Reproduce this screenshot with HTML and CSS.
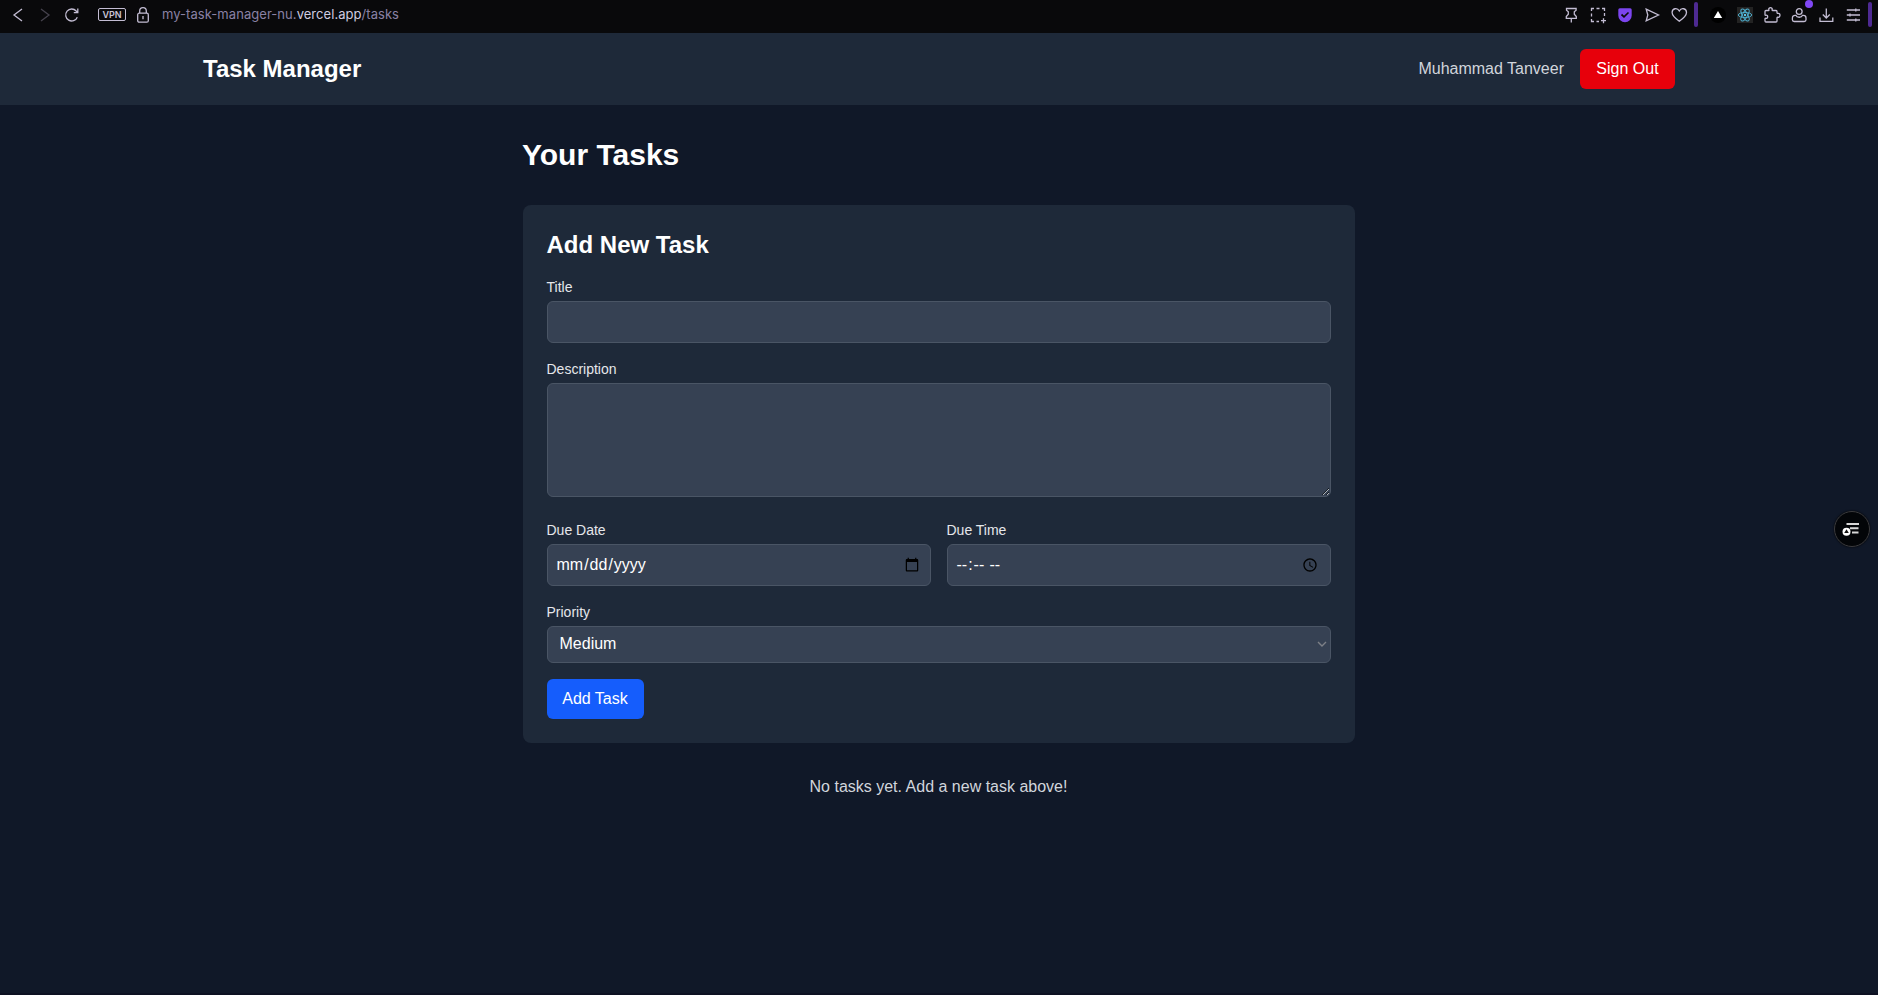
FILE: index.html
```html
<!DOCTYPE html>
<html lang="en">
<head>
<meta charset="utf-8">
<title>Task Manager</title>
<link rel="stylesheet" href="styles.css">
</head>
<body>
<div class="browser-bar">
  <div class="nav-tools">
    <svg class="icon" viewBox="0 0 16 16"><path d="M12 2 4 8l8 6"/></svg>
    <svg class="icon icon-disabled" viewBox="0 0 16 16"><path d="m4 2 8 6-8 6"/></svg>
    <svg class="icon" viewBox="0 0 16 16"><path d="M13.300 10.200A6 6 0 1 1 12.200 4l1.300 1.300M13.800 1.600V5.600h-4"/></svg>
  </div>
  <span class="vpn">VPN</span>
  <svg class="lock" viewBox="0 0 12 16"><rect x=".7" y="6.200" width="10.600" height="9" rx="1.500"/><path d="M2.700 6V4a3.300 3.300 0 0 1 6.600 0v2M6 9v3.200"/></svg>
  <div class="url">my-task-manager-nu.<span class="domain">vercel.app</span>/tasks</div>
  <div class="actions">
    <svg class="icon" viewBox="0 0 16 16"><path d="M3.500 1.500h9.600v1.800L11.300 4.800v2.500l2 2.200v1.800h-10V9.500l2-2.200V4.800L3.500 3.300ZM8.300 11.300v4.200"/></svg>
    <svg class="icon" viewBox="0 0 16 16"><path d="M1.500 4V1.500H4M6.500 1.500h3M12 1.500h2.500V4M14.500 6v3M1.500 6.500v3M1.500 12v2.500H4M6.500 14.500H9M11 13.700h5M13.500 11.200v5"/></svg>
    <svg class="icon" viewBox="0 0 16 16"><path class="pocket" d="M2.800 1.200h10.400a1.500 1.500 0 0 1 1.500 1.500V8.500a6.700 6.700 0 0 1-13.400 0V2.700a1.500 1.500 0 0 1 1.500-1.500Z"/><path class="pocket-check" d="m4.500 7.500 2.500 2.300 4.500-4.300"/></svg>
    <svg class="icon" viewBox="0 0 16 16"><path d="M2.200 2.200 14.500 8 2.200 13.800 3.800 8Z"/></svg>
    <svg class="icon" viewBox="0 0 16 16"><path d="M8.300 14.300C4.300 11.400 1.100 8.800 1.100 5.500c0-4.300 5.200-5.200 7.200-1.500 2-3.700 7.200-2.800 7.200 1.500 0 3.300-3.200 5.900-7.200 8.800Z"/></svg>
    <span class="divider"></span>
    <svg class="icon" viewBox="0 0 16 16"><circle class="vercel-bg" cx="8" cy="8" r="8"/><path class="vercel" d="m8 4 4.200 7H3.800Z"/></svg>
    <svg class="icon react" viewBox="0 0 16 16"><rect class="react-bg" width="16" height="16"/><ellipse cx="8" cy="8" rx="6.700" ry="2.600"/><ellipse cx="8" cy="8" rx="6.700" ry="2.600" transform="rotate(60 8 8)"/><ellipse cx="8" cy="8" rx="6.700" ry="2.600" transform="rotate(120 8 8)"/><circle class="react-core" cx="8" cy="8" r="1.200"/></svg>
    <svg class="icon" viewBox="0 0 16 16"><path d="M2 3.500h2.500c.5 0 .6-.4.4-.8C4 0 9 0 8.100 2.700c-.1.400 0 .8.500.8H12c.6 0 1 .4 1 1v1.300c0 .5.400.7.800.6 2.900-.9 2.900 4.600 0 3.800-.4-.1-.8.100-.8.600V14c0 .6-.4 1-1 1H2c-.6 0-1-.4-1-1v-2.200c0-.5.400-.6.800-.5 2.500.7 2.500-3.700 0-3-.4.100-.8 0-.8-.5V4.500c0-.6.400-1 1-1Z"/></svg>
    <span class="profile"><svg class="icon" viewBox="0 0 16 16"><circle cx="8.200" cy="4.500" r="2.900"/><path d="M4.800 8.300H4a2.600 2.600 0 0 0-2.600 2.600v1.800c0 1.200.6 1.800 1.800 1.800h10c1.200 0 1.800-.6 1.800-1.800v-1.800a2.600 2.600 0 0 0-2.600-2.600h-.8c-1.100 2.600-5.700 2.600-6.800 0Z"/></svg><span class="badge"></span></span>
    <svg class="icon" viewBox="0 0 16 16"><path d="M8.300 1.500v9M4.800 7.500 8.300 11l3.500-3.500M2 10.500v3.800h12.800v-3.800"/></svg>
    <svg class="icon" viewBox="0 0 16 16"><path d="M1.800 3h13.200M1.800 8h13.200M1.800 13h13.200M10.800 1.500v3M5 6.500v3M10.800 11.500v3"/></svg>
    <span class="divider divider-end"></span>
  </div>
</div>

<header class="site-header">
  <div class="container">
    <div class="brand">Task Manager</div>
    <div class="account"><span>Muhammad Tanveer</span><button class="btn btn-danger" type="button">Sign Out</button></div>
  </div>
</header>

<main class="content">
  <h1 class="page-title">Your Tasks</h1>
  <form class="card">
    <h2 class="card-title">Add New Task</h2>
    <div class="fields">
      <div><label class="label" for="title">Title</label><input class="control" id="title" type="text"></div>
      <div class="description"><label class="label" for="description">Description</label><textarea class="control" id="description" rows="4"></textarea></div>
      <div class="row">
        <div><label class="label" for="date">Due Date</label><input class="control" id="date" type="date"></div>
        <div><label class="label" for="time">Due Time</label><input class="control" id="time" type="time"></div>
      </div>
      <div>
        <label class="label" for="priority">Priority</label>
        <div class="select-wrap">
          <select class="control select" id="priority"><option>Low</option><option selected>Medium</option><option>High</option></select>
          <svg class="chevron" viewBox="0 0 10 6"><path d="m1 1 4 4 4-4"/></svg>
        </div>
      </div>
      <button class="btn btn-primary" type="button">Add Task</button>
    </div>
  </form>
  <p class="empty">No tasks yet. Add a new task above!</p>
</main>

<div class="float-button">
  <svg class="float-icon" viewBox="0 0 34 34"><path class="float-lines" d="M11.500 12H24M15 16.300h8.500M17 20.500h6.500"/><circle class="float-dot" cx="11.500" cy="19.800" r="4"/><path class="float-mark" d="m11.500 17.300 2.300 3.700H9.200Z"/></svg>
</div>
</body>
</html>
```
FILE: styles.css
```css
* { box-sizing: border-box; }
body {
  margin: 0;
  height: 995px;
  overflow: hidden;
  background: #101828;
  color: #fff;
  font: 16px/24px "Liberation Sans", Arial, sans-serif;
  border-bottom: 2px solid #0d1122;
}
h1, h2, p { margin: 0; }

.browser-bar {
  display: flex;
  align-items: center;
  height: 33px;
  padding: 0 0 4px 10px;
  background: #09090b;
}
.icon { display: block; width: 16px; height: 16px; flex: none; overflow: visible; fill: none; stroke: #c3bdd3; stroke-width: 1.3; }
.icon-disabled { stroke: #45424d; }
.nav-tools { display: flex; gap: 11px; }
.vpn {
  width: 28px;
  height: 13px;
  margin-left: 18px;
  border: 1px solid #c3bdd3;
  border-radius: 2px;
  color: #c9c4d6;
  font: 600 9px/11px Inter, sans-serif;
  text-align: center;
}
.lock { width: 12px; height: 16px; margin-left: 10.5px; fill: none; stroke: #c3bdd3; stroke-width: 1.3; }
.url { margin-left: 13.5px; padding-bottom: 1px; color: #8a81a5; font: 13px/20px Inter, sans-serif; letter-spacing: .05px; }
.domain { color: #d0cbe0; }
.actions { display: flex; align-items: center; gap: 11px; margin-left: auto; }
.divider { width: 4px; height: 25px; margin: 0 1px 0 -4px; border-radius: 2px; background: #4e2a92; }
.divider-end { margin: 0 6px 0 -4px; }
.pocket { fill: #7c45ef; stroke: none; }
.pocket-check { stroke: #09090b; stroke-width: 1.7; }
.vercel-bg { fill: #000; stroke: none; }
.vercel { fill: #fff; stroke: none; }
.react { stroke: #4fb3d5; stroke-width: .9; }
.react-bg { fill: #232323; stroke: none; }
.react-core { fill: #5ac8ee; stroke: none; }
.profile { position: relative; }
.badge { position: absolute; top: -7px; right: -6px; width: 8px; height: 8px; border-radius: 50%; background: #8148f5; }

.site-header { height: 72px; background: #1e2939; }
.container { display: flex; align-items: center; justify-content: space-between; width: 1472px; height: 72px; margin: 0 auto; }
.brand { font-size: 24px; line-height: 32px; font-weight: 700; }
.account { display: flex; align-items: center; gap: 16px; color: #d1d5dc; }
.btn { height: 40px; padding: 8px 0; border: 0; border-radius: 6px; color: #fff; font: inherit; }
.btn-danger { width: 95px; background: #e7000b; }
.btn-primary { justify-self: start; width: 97px; padding-right: 1px; background: #155dfc; }

.content { width: 832px; margin: 32px auto 0; }
.page-title { margin-left: -1px; font-size: 30px; line-height: 36px; }
.card { height: 538px; margin-top: 32px; padding: 24px; border-radius: 8px; background: #1e2939; }
.card-title { margin: 0 0 16px -.5px; font-size: 24px; line-height: 32px; }
.fields { display: grid; gap: 16px; }
.label { display: block; margin: 0 0 4px -.5px; color: #e5e7eb; font-size: 14px; line-height: 20px; }
.control {
  display: block;
  width: 100%;
  height: 42px;
  padding: 8px 8px 8px 7.5px;
  border: 1px solid #4a5565;
  border-radius: 6px;
  background-color: #364153;
  color: #fff;
  font: inherit;
}
textarea.control { height: 114px; }
.description { padding-bottom: 7px; }
.select-wrap { display: grid; align-items: center; }
.select { grid-area: 1 / 1; height: 37px; padding: 5px 8px 7px 11.5px; appearance: none; }
.chevron { grid-area: 1 / 1; justify-self: end; width: 10px; height: 6px; margin: 0 4px 1px 0; fill: none; stroke: #7d8087; stroke-width: 1.4; pointer-events: none; }
.row { display: grid; grid-template-columns: 1fr 1fr; gap: 16px; }
.empty { margin-top: 32px; padding-right: 1px; color: #d1d5dc; text-align: center; }

.float-button {
  position: absolute;
  left: 1834px;
  top: 511px;
  width: 36px;
  height: 36px;
  border: 1px solid #3b3b3e;
  border-radius: 50%;
  background: #030508;
  box-shadow: 0 0 2px #000;
}
.float-icon { display: block; width: 34px; height: 34px; }
.float-lines { stroke: #d8d8d8; stroke-width: 2; }
.float-dot { fill: #fff; }
.float-mark { fill: #111; }
```
